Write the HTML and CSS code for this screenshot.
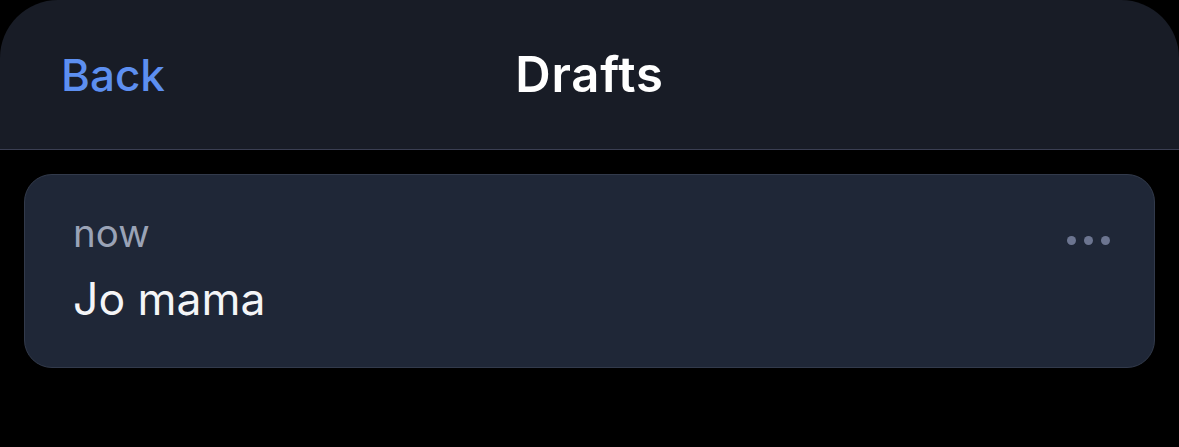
FILE: index.html
```html
<!DOCTYPE html>
<html lang="en">
<head>
    <meta charset="UTF-8">
    <meta name="viewport" content="width=device-width, initial-scale=1.0">
    <title>Drafts</title>
    <link rel="stylesheet" href="styles.css">
</head>
<body>
    <div class="screen">
        <div class="header">
            <a class="back" href="#">Back</a>
            <h1 class="title">Drafts</h1>
            <div class="spacer"></div>
        </div>

        <div class="list">
            <div class="draft">
                <div class="draft-body">
                    <div class="draft-time">now</div>
                    <div class="draft-text">Jo mama</div>
                </div>
                <button class="more" type="button" aria-label="More">
                    <span></span><span></span><span></span>
                </button>
            </div>
        </div>
    </div>
</body>
</html>
```

FILE: styles.css
```css
* {
    margin: 0;
    padding: 0;
    box-sizing: border-box;
}

body {
    font-family: 'Inter', 'Noto Sans', sans-serif;
    background: #000;
    min-height: 100vh;
}

.header {
    display: grid;
    grid-template-columns: 1fr auto 1fr;
    align-items: center;
    height: 150px;
    padding: 0 61px;
    background: #181c26;
    border-bottom: 1px solid #3a3e52;
    border-radius: 58px 58px 0 0;
}

.back {
    justify-self: start;
    color: #5d8ff0;
    text-decoration: none;
    font-size: 44px;
    font-weight: 500;
}

.title {
    color: #fff;
    font-size: 49px;
    font-weight: 600;
    letter-spacing: 0.8px;
}

.list {
    padding: 24px;
}

.draft {
    display: flex;
    justify-content: space-between;
    align-items: flex-start;
    height: 194px;
    padding: 35px 44px 0 48px;
    background: #1f2737;
    border: 1px solid #323a4b;
    border-radius: 28px;
}

.draft-time {
    color: #9aa3b6;
    font-size: 38.5px;
    line-height: 46px;
}

.draft-text {
    margin-top: 17px;
    color: #f4f5f7;
    font-size: 44.5px;
    line-height: 53px;
}

.more {
    display: flex;
    gap: 8px;
    margin-top: 26px;
    background: none;
    border: none;
}

.more span {
    width: 9px;
    height: 9px;
    border-radius: 50%;
    background: #6c7590;
}
```
